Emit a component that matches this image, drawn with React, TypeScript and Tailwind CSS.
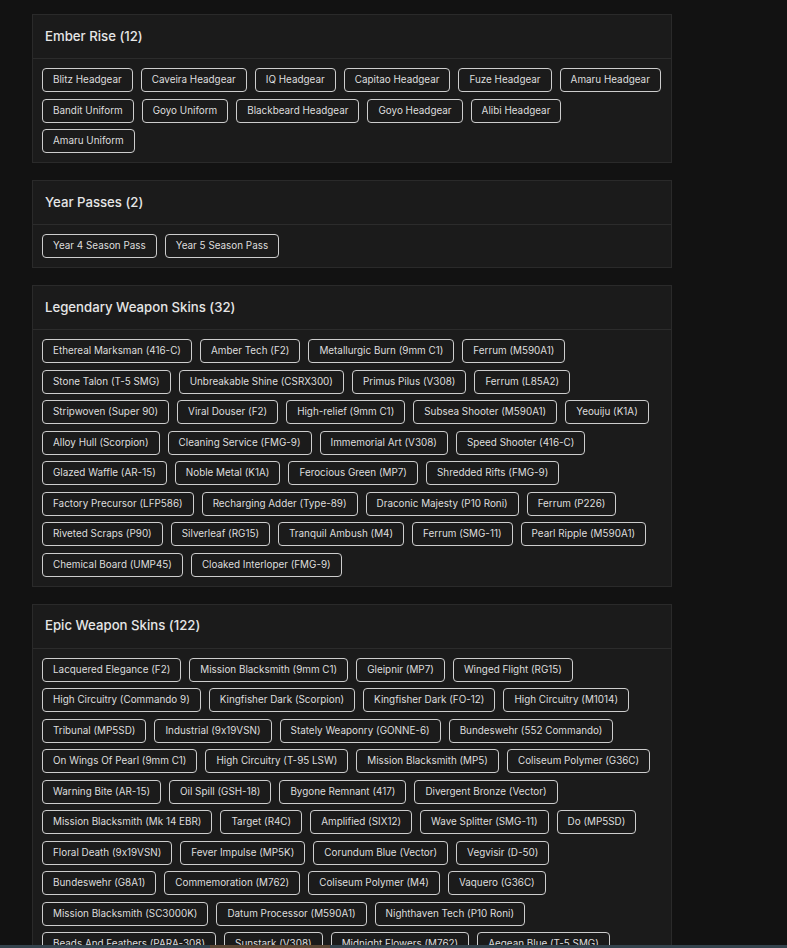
import React from "react";

type Section = { title: string; rows: string[][] };

const sections: Section[] = [
  {
    title: "Ember Rise (12)",
    rows: [
      ["Blitz Headgear", "Caveira Headgear", "IQ Headgear", "Capitao Headgear", "Fuze Headgear", "Amaru Headgear"],
      ["Bandit Uniform", "Goyo Uniform", "Blackbeard Headgear", "Goyo Headgear", "Alibi Headgear"],
      ["Amaru Uniform"],
    ],
  },
  {
    title: "Year Passes (2)",
    rows: [["Year 4 Season Pass", "Year 5 Season Pass"]],
  },
  {
    title: "Legendary Weapon Skins (32)",
    rows: [
      ["Ethereal Marksman (416-C)", "Amber Tech (F2)", "Metallurgic Burn (9mm C1)", "Ferrum (M590A1)"],
      ["Stone Talon (T-5 SMG)", "Unbreakable Shine (CSRX300)", "Primus Pilus (V308)", "Ferrum (L85A2)"],
      ["Stripwoven (Super 90)", "Viral Douser (F2)", "High-relief (9mm C1)", "Subsea Shooter (M590A1)", "Yeouiju (K1A)"],
      ["Alloy Hull (Scorpion)", "Cleaning Service (FMG-9)", "Immemorial Art (V308)", "Speed Shooter (416-C)"],
      ["Glazed Waffle (AR-15)", "Noble Metal (K1A)", "Ferocious Green (MP7)", "Shredded Rifts (FMG-9)"],
      ["Factory Precursor (LFP586)", "Recharging Adder (Type-89)", "Draconic Majesty (P10 Roni)", "Ferrum (P226)"],
      ["Riveted Scraps (P90)", "Silverleaf (RG15)", "Tranquil Ambush (M4)", "Ferrum (SMG-11)", "Pearl Ripple (M590A1)"],
      ["Chemical Board (UMP45)", "Cloaked Interloper (FMG-9)"],
    ],
  },
  {
    title: "Epic Weapon Skins (122)",
    rows: [
      ["Lacquered Elegance (F2)", "Mission Blacksmith (9mm C1)", "Gleipnir (MP7)", "Winged Flight (RG15)"],
      ["High Circuitry (Commando 9)", "Kingfisher Dark (Scorpion)", "Kingfisher Dark (FO-12)", "High Circuitry (M1014)"],
      ["Tribunal (MP5SD)", "Industrial (9x19VSN)", "Stately Weaponry (GONNE-6)", "Bundeswehr (552 Commando)"],
      ["On Wings Of Pearl (9mm C1)", "High Circuitry (T-95 LSW)", "Mission Blacksmith (MP5)", "Coliseum Polymer (G36C)"],
      ["Warning Bite (AR-15)", "Oil Spill (GSH-18)", "Bygone Remnant (417)", "Divergent Bronze (Vector)"],
      ["Mission Blacksmith (Mk 14 EBR)", "Target (R4C)", "Amplified (SIX12)", "Wave Splitter (SMG-11)", "Do (MP5SD)"],
      ["Floral Death (9x19VSN)", "Fever Impulse (MP5K)", "Corundum Blue (Vector)", "Vegvisir (D-50)"],
      ["Bundeswehr (G8A1)", "Commemoration (M762)", "Coliseum Polymer (M4)", "Vaquero (G36C)"],
      ["Mission Blacksmith (SC3000K)", "Datum Processor (M590A1)", "Nighthaven Tech (P10 Roni)"],
      ["Beads And Feathers (PARA-308)", "Sunstark (V308)", "Midnight Flowers (M762)", "Aegean Blue (T-5 SMG)"],
      ["Mission Blacksmith (G36C)", "Bundeswehr (AUG A2)", "Coliseum Polymer (F2)"],
    ],
  },
];

function Tag({ label }: { label: string }) {
  return (
    <div className="flex h-[24px] items-center rounded-[4px] border border-[#cdcdcd] px-[10px] text-[9.9px] leading-none text-[#dedede] whitespace-nowrap">
      {label}
    </div>
  );
}

function Card({ section }: { section: Section }) {
  return (
    <div className="w-[640px] border border-[#2a2a2a] bg-[#1b1b1b]">
      <div className="flex h-[44px] items-center border-b border-[#2c2c2c] px-[12px] text-[13.2px] font-medium text-[#e6e6e6]">
        {section.title}
      </div>
      <div className="flex flex-col gap-y-[6.5px] px-[9px] pt-[9px] pb-[9px]">
        {section.rows.map((row, i) => (
          <div key={i} className="flex gap-x-[8px]">
            {row.map((t) => (
              <Tag key={t} label={t} />
            ))}
          </div>
        ))}
      </div>
    </div>
  );
}

export default function App() {
  return (
    <div
      className="relative h-[948px] overflow-hidden bg-[#121212] [font-feature-settings:'calt'_0]"
      style={{ fontFamily: "Inter, 'Noto Sans', sans-serif" }}
    >
      <div className="flex flex-col gap-[17px] pl-[32px] pt-[14px]">
        {sections.map((s) => (
          <Card key={s.title} section={s} />
        ))}
      </div>
      <div className="absolute bottom-0 left-0 right-0 flex h-[3px]">
        <div className="w-[210px] bg-[#34434d]" />
        <div className="w-[120px] bg-[#5a4634]" />
        <div className="flex-1 bg-[#34434d]" />
      </div>
    </div>
  );
}
